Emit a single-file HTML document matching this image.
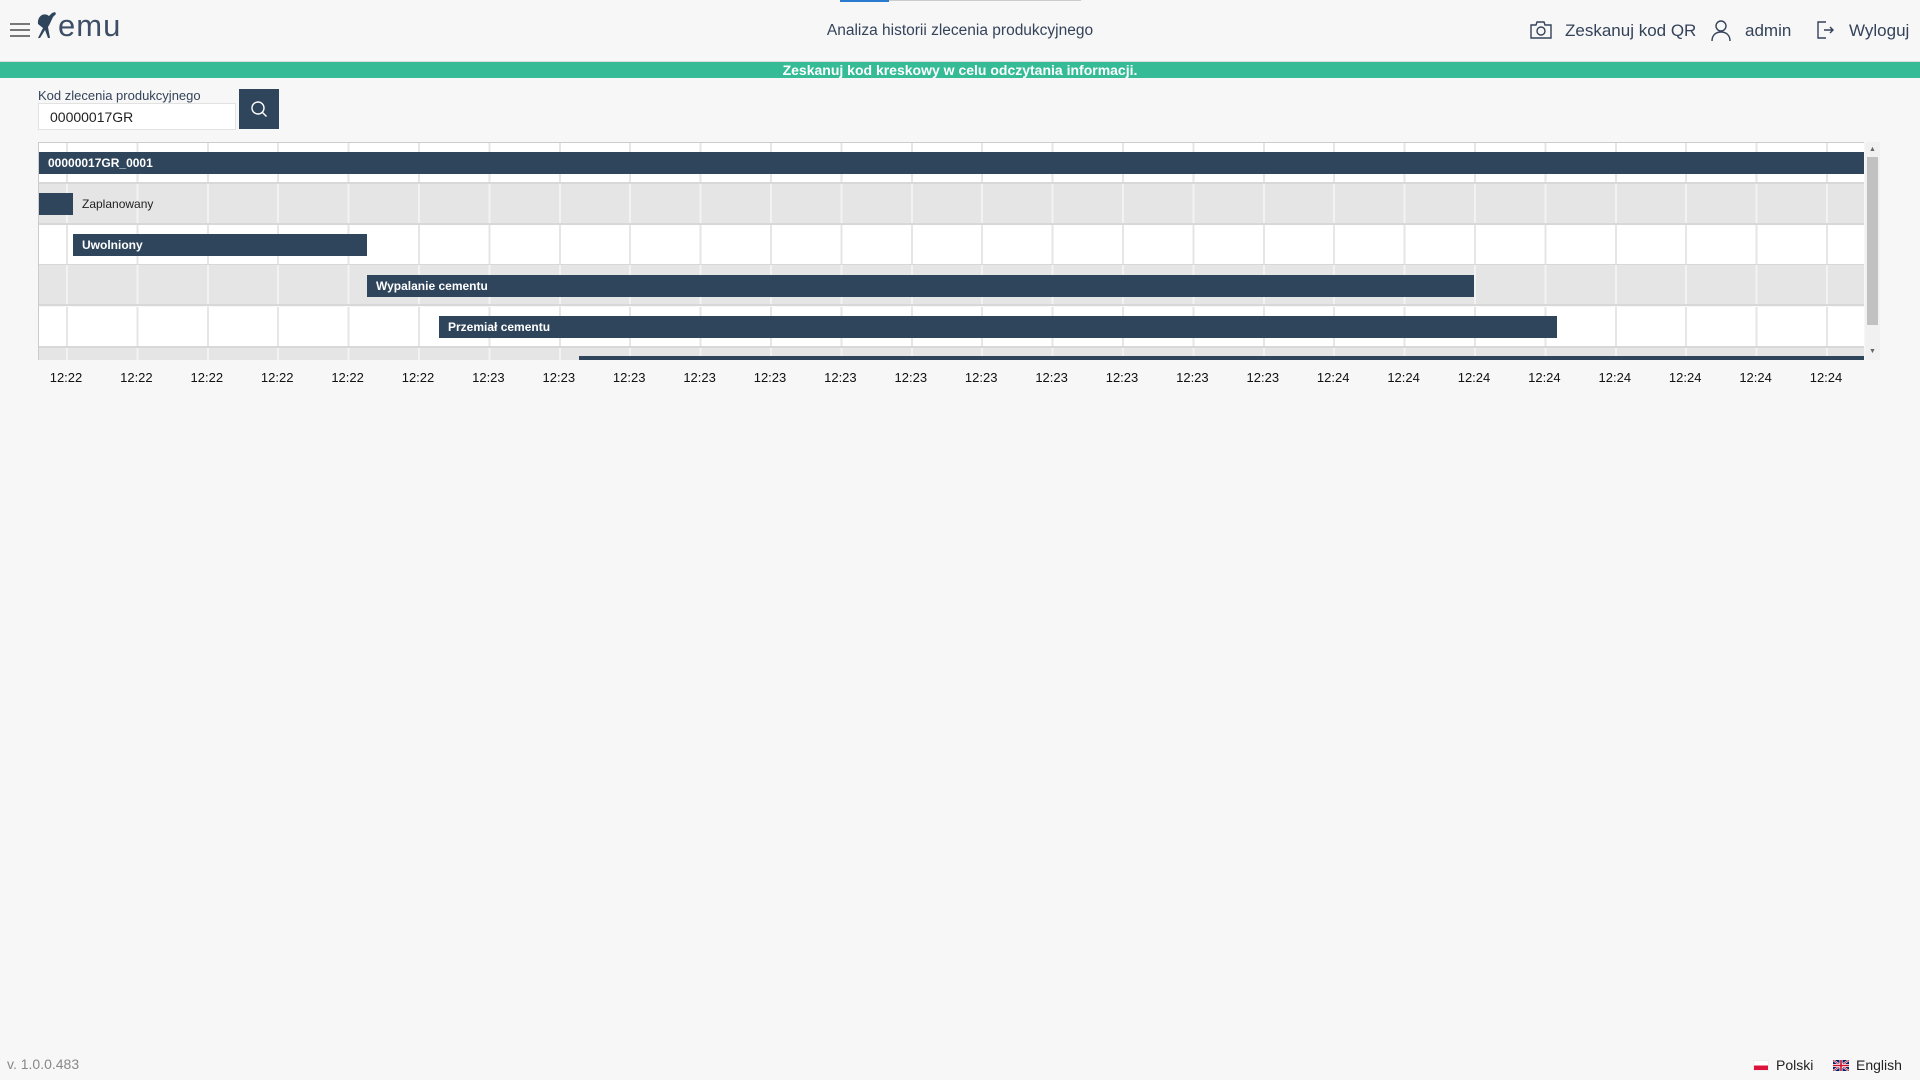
<!DOCTYPE html>
<html><head><meta charset="utf-8"><style>
*{box-sizing:border-box;margin:0;padding:0}
body{width:1920px;height:1080px;background:#f7f7f7;font-family:"Liberation Sans",sans-serif;position:relative;overflow:hidden;color:#34435a}
.abs{position:absolute}
.hdr{font-size:17px;color:#34435a}
.green{left:0;top:61px;width:1920px;height:17px;background:#35bb96;color:#fff;font-size:14px;font-weight:bold;text-align:center;line-height:17px;border-top:1px solid #ddd}
.chart{left:38px;top:142px;width:1826px;height:218px;border-top:1px solid #ccc;border-left:1px solid #ccc;overflow:hidden}
.row{position:absolute;left:0;width:1826px;height:41px;border-bottom:2px solid #d8d8d8;
background-image:repeating-linear-gradient(90deg,transparent 0,transparent 27px,#e6e6e6 27px,#e6e6e6 29px,transparent 29px,transparent 70.4px)}
.g{background-color:#e5e5e5;background-image:repeating-linear-gradient(90deg,transparent 0,transparent 27px,#f2f2f2 27px,#f2f2f2 29px,transparent 29px,transparent 70.4px)}
.w{background-color:#fff}
.bar{position:absolute;height:22px;background:#2f455c;color:#fff;font-size:12px;line-height:22px;padding-left:9px;font-weight:bold;font-family:"Liberation Sans",Arial,sans-serif}
.t{position:absolute;top:370px;font-size:13px;color:#111;width:40px;margin-left:-20px;text-align:center}
</style></head><body>
<div class="abs" style="left:840px;top:0;width:49px;height:2px;background:#2a7ad0"></div>
<div class="abs" style="left:889px;top:0;width:192px;height:1px;background:#ccc"></div>
<div class="abs" style="left:10px;top:23px;width:20px;height:2px;background:#777"></div>
<div class="abs" style="left:10px;top:29px;width:20px;height:2px;background:#777"></div>
<div class="abs" style="left:10px;top:35px;width:20px;height:2px;background:#777"></div>
<svg class="abs" style="left:36px;top:10px" width="30" height="30" viewBox="0 0 30 30"><path d="M2 14 C1 6 8 2 13 6 L16 3 L19 2 L20 4 L17 7 C15 11 14 14 12 17 L14 28 L12 28 L9 20 L4 28 L2 28 L7 18 Z" fill="#2f455c"/></svg>
<div class="abs" style="left:58px;top:8px;font-size:31px;color:#3d4f66;letter-spacing:1px">emu</div>
<div class="abs hdr" style="left:0;width:1920px;top:22px;text-align:center;font-size:15.5px">Analiza historii zlecenia produkcyjnego</div>
<svg class="abs" style="left:1530px;top:21px" width="22" height="18" viewBox="0 0 22 18" fill="none" stroke="#34435a" stroke-width="1.4"><path d="M1 4h5l1-3h7l1 3h6v13H1z"/><circle cx="11" cy="10" r="4"/></svg>
<div class="abs hdr" style="left:1565px;top:21px">Zeskanuj kod QR</div>
<svg class="abs" style="left:1711px;top:20px" width="20" height="21" viewBox="0 0 20 21" fill="none" stroke="#34435a" stroke-width="1.4"><circle cx="10" cy="6" r="5"/><path d="M1 21c0-6 4-9 9-9s9 3 9 9"/></svg>
<div class="abs hdr" style="left:1745px;top:21px">admin</div>
<svg class="abs" style="left:1817px;top:21px" width="18" height="18" viewBox="0 0 18 18" fill="none" stroke="#34435a" stroke-width="1.4"><path d="M9 1H1v16h8M7 9h9M13 6l3 3-3 3"/></svg>
<div class="abs hdr" style="left:1849px;top:21px">Wyloguj</div>
<div class="abs green">Zeskanuj kod kreskowy w celu odczytania informacji.</div>
<div class="abs" style="left:38px;top:88px;font-size:13px;color:#34435a">Kod zlecenia produkcyjnego</div>
<div class="abs" style="left:38px;top:103px;width:198px;height:27px;background:#fff;border:1px solid #e2e2e2;font-size:14px;padding:5px 0 0 11px;color:#222">00000017GR</div>
<div class="abs" style="left:239px;top:89px;width:40px;height:40px;background:#2f455c"></div>
<svg class="abs" style="left:249px;top:99px" width="20" height="20" viewBox="0 0 20 20" fill="none" stroke="#fff" stroke-width="1.4"><circle cx="9" cy="9" r="6"/><path d="M13.5 13.5l4 4"/></svg>
<div class="abs chart">
<div class="row w" style="top:0"></div>
<div class="row g" style="top:41px"></div>
<div class="row w" style="top:82px"></div>
<div class="row g" style="top:122px"></div>
<div class="row w" style="top:164px"></div>
<div class="row g" style="top:205px"></div>
<div class="bar" style="left:0;top:9px;width:1826px">00000017GR_0001</div>
<div class="bar" style="left:0;top:50px;width:34px"></div>
<div class="abs" style="left:43px;top:50px;font-size:12px;line-height:22px;color:#222">Zaplanowany</div>
<div class="bar" style="left:34px;top:91px;width:294px">Uwolniony</div>
<div class="bar" style="left:328px;top:132px;width:1107px">Wypalanie cementu</div>
<div class="bar" style="left:400px;top:173px;width:1118px">Przemiał cementu</div>
<div class="bar" style="left:540px;top:213px;width:1286px"></div>
</div>
<div class="abs" style="left:1865px;top:142px;width:15px;height:218px;background:#f1f1f1"></div>
<div class="abs" style="left:1867px;top:157px;width:11px;height:168px;background:#c1c1c1"></div>
<div class="abs" style="left:1869px;top:146px;font-size:7px;color:#666">▲</div>
<div class="abs" style="left:1869px;top:348px;font-size:7px;color:#666">▼</div>
<div class="t" style="left:66px">12:22</div><div class="t" style="left:136.4px">12:22</div><div class="t" style="left:206.8px">12:22</div><div class="t" style="left:277.2px">12:22</div><div class="t" style="left:347.6px">12:22</div><div class="t" style="left:418px">12:22</div>
<div class="t" style="left:488.4px">12:23</div><div class="t" style="left:558.8px">12:23</div><div class="t" style="left:629.2px">12:23</div><div class="t" style="left:699.6px">12:23</div><div class="t" style="left:770px">12:23</div><div class="t" style="left:840.4px">12:23</div><div class="t" style="left:910.8px">12:23</div><div class="t" style="left:981.2px">12:23</div><div class="t" style="left:1051.6px">12:23</div><div class="t" style="left:1122px">12:23</div><div class="t" style="left:1192.4px">12:23</div><div class="t" style="left:1262.8px">12:23</div>
<div class="t" style="left:1333.2px">12:24</div><div class="t" style="left:1403.6px">12:24</div><div class="t" style="left:1474px">12:24</div><div class="t" style="left:1544.4px">12:24</div><div class="t" style="left:1614.8px">12:24</div><div class="t" style="left:1685.2px">12:24</div><div class="t" style="left:1755.6px">12:24</div><div class="t" style="left:1826px">12:24</div>
<div class="abs" style="left:7px;top:1056px;font-size:14px;color:#888">v. 1.0.0.483</div>
<div class="abs" style="left:1753px;top:1060px;width:16px;height:11px;border:1px solid #eee;background:linear-gradient(#fff 50%,#dc143c 50%)"></div>
<div class="abs" style="left:1776px;top:1057px;font-size:14px;color:#222">Polski</div>
<svg class="abs" style="left:1833px;top:1060px" width="16" height="11" viewBox="0 0 16 11"><rect width="16" height="11" fill="#012169"/><path d="M0 0L16 11M16 0L0 11" stroke="#fff" stroke-width="2"/><path d="M0 0L16 11M16 0L0 11" stroke="#c8102e" stroke-width="0.8"/><path d="M8 0v11M0 5.5h16" stroke="#fff" stroke-width="3"/><path d="M8 0v11M0 5.5h16" stroke="#c8102e" stroke-width="1.6"/></svg>
<div class="abs" style="left:1856px;top:1057px;font-size:14px;color:#222">English</div>
</body></html>
